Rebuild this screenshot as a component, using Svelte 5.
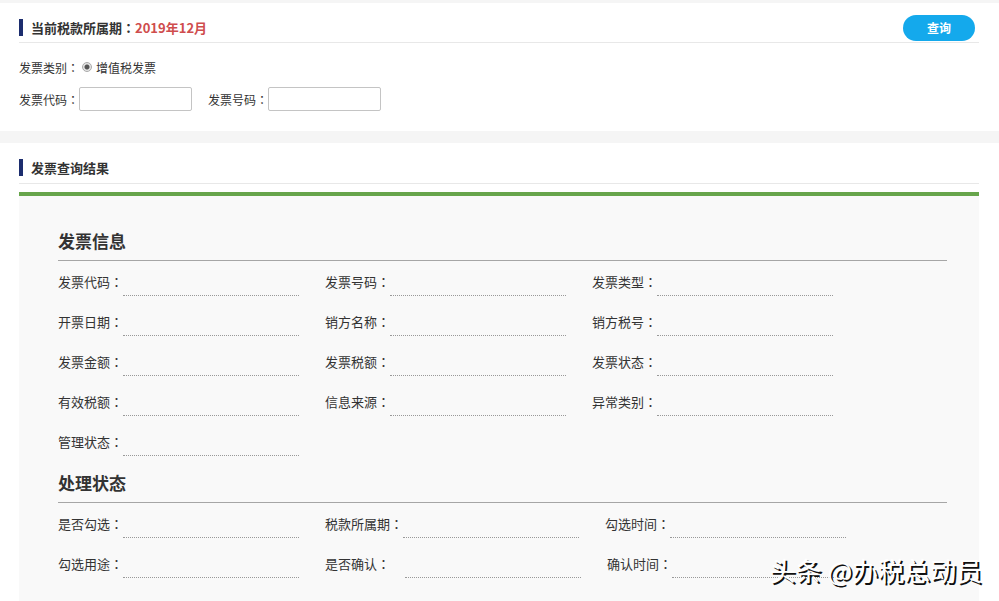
<script>
  const invoiceInfo = [
    ['发票代码', '发票号码', '发票类型'],
    ['开票日期', '销方名称', '销方税号'],
    ['发票金额', '发票税额', '发票状态'],
    ['有效税额', '信息来源', '异常类别'],
    ['管理状态']
  ];
  const processState = [
    ['是否勾选', '税款所属期', '勾选时间'],
    ['勾选用途', '是否确认', '确认时间']
  ];
  const groups = [
    { title: '发票信息', rows: invoiceInfo },
    { title: '处理状态', rows: processState }
  ];
  const spaced = ['是否确认'];

  let code = $state('');
  let number = $state('');
  let kind = $state('vat');
</script>

<main>
  <section class="query">
    <header class="bar">
      <h2>当前税款所属期<span class="colon">：</span><strong>2019年12月</strong></h2>
      <button type="button">查询</button>
    </header>
    <form>
      <div class="line kinds">
        <span>发票类别<span class="colon">：</span></span>
        <input type="radio" id="vat" value="vat" bind:group={kind} />
        <label for="vat">增值税发票</label>
      </div>
      <div class="line">
        <label for="code">发票代码<span class="colon">：</span></label>
        <input class="text" id="code" type="text" bind:value={code} />
        <label class="next" for="number">发票号码<span class="colon">：</span></label>
        <input class="text" id="number" type="text" bind:value={number} />
      </div>
    </form>
  </section>

  <section class="result">
    <header class="bar">
      <h2>发票查询结果</h2>
    </header>
    <div class="panel">
      {#each groups as group}
        <h3>{group.title}</h3>
        {#each group.rows as row}
          <dl>
            {#each row as name}
              <div class="cell">
                <dt class:spaced={spaced.includes(name)}>{name}<span class="colon">：</span></dt>
                <dd></dd>
              </div>
            {/each}
          </dl>
        {/each}
      {/each}
    </div>
    <div class="watermark">头条 @办税总动员</div>
  </section>
</main>

<style>
  :global(body) {
    margin: 0;
    background: #f5f5f5;
  }
  main {
    padding-top: 3px;
    font-family: 'Noto Sans CJK SC', sans-serif;
    font-size: 12px;
    color: #333;
  }
  .colon {
    font-family: 'Noto Sans CJK TC', sans-serif;
  }
  section {
    padding: 0 20px 0 19px;
    background: #fff;
  }
  .query {
    padding-bottom: 20px;
    margin-bottom: 12px;
  }
  .result {
    position: relative;
  }
  .bar {
    display: flex;
    align-items: center;
    justify-content: space-between;
    height: 40px;
    padding: 10px 4px 0 0;
    box-sizing: border-box;
    border-bottom: 1px solid #e8e8e8;
  }
  .result .bar {
    height: 41px;
    padding-top: 9px;
  }
  h2 {
    margin: 0;
    padding-left: 8px;
    border-left: 4px solid #1c2d6e;
    font-size: 13px;
    line-height: 17px;
    font-weight: 600;
  }
  strong {
    color: #cf4d4d;
    font-weight: 700;
  }
  button {
    width: 72px;
    height: 26px;
    padding: 0;
    border: 0;
    border-radius: 13px;
    background: #14a9ec;
    color: #fff;
    font-family: inherit;
    font-size: 12px;
    font-weight: 700;
  }
  form {
    padding-top: 14px;
  }
  .line {
    display: flex;
    align-items: center;
  }
  .kinds {
    height: 20px;
    margin-bottom: 10px;
  }
  input[type='radio'] {
    appearance: none;
    width: 10px;
    height: 10px;
    margin: 0 4px 0 3px;
    border: 1px solid #aaa;
    border-radius: 50%;
    background: radial-gradient(circle, #555 0 2px, #e4e4e4 3px);
  }
  .text {
    width: 113px;
    height: 24px;
    padding: 0 4px;
    box-sizing: border-box;
    border: 1px solid #c4c4c4;
    border-radius: 2px;
    background: #fff;
    font-family: inherit;
    font-size: 12px;
  }
  .next {
    margin-left: 16px;
  }
  .panel {
    margin-top: 8px;
    padding: 22px 32px 18px 39px;
    border-top: 4px solid #67a54b;
    background: #f9f9f9;
  }
  h3 {
    margin: 11px 0 0;
    padding-bottom: 7px;
    border-bottom: 1px solid #a6a6a6;
    font-size: 17px;
    line-height: 24px;
    font-weight: 700;
  }
  h3:not(:first-child) {
    margin-top: 10px;
  }
  dl {
    display: flex;
    gap: 26px;
    height: 40px;
    margin: 0;
    font-size: 13px;
    line-height: 42px;
  }
  .cell {
    display: flex;
  }
  dt {
    white-space: nowrap;
  }
  .spaced {
    width: 80px;
  }
  dd {
    width: 176px;
    height: 34px;
    margin: 0;
    border-bottom: 1px dotted #999;
  }
  .watermark {
    position: absolute;
    right: 17px;
    bottom: 13px;
    color: #fff;
    font-size: 26px;
    line-height: 36px;
    text-shadow: 2px 2px 0 #111;
    white-space: nowrap;
  }
</style>
